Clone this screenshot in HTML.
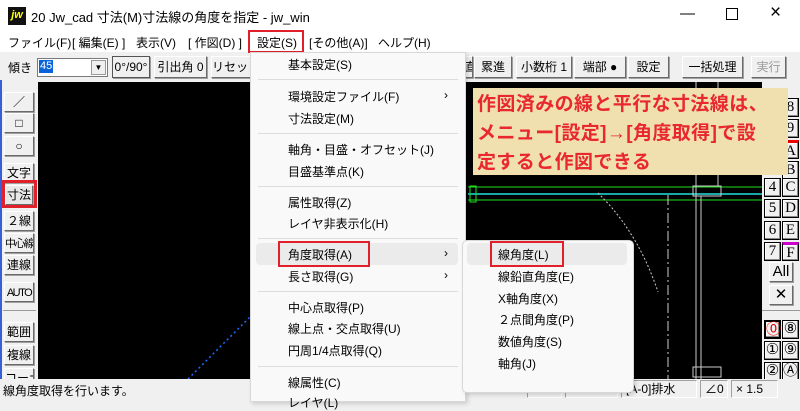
<!DOCTYPE html>
<html><head><meta charset="utf-8"><style>
*{margin:0;padding:0;box-sizing:border-box}
body{width:800px;height:400px;overflow:hidden;background:#f0f0f0;font-family:"Liberation Sans","Noto Sans CJK JP",sans-serif;font-size:12px;color:#000;position:relative}
.a{position:absolute;white-space:nowrap}
.btn{position:absolute;background:#f0f0f0;border:1px solid;border-color:#fff #6a6a6a #6a6a6a #fff;box-shadow:1px 1px 0 #a0a0a0;text-align:center;font-size:12px;line-height:18px;white-space:nowrap;overflow:hidden}
.mi{position:absolute;left:288px;font-size:12px;white-space:nowrap}
.sep{position:absolute;left:258px;width:200px;height:1px;background:#dcdcdc}
.si{position:absolute;left:498px;font-size:12px;white-space:nowrap}
.rb{position:absolute;width:17px;height:19px;background:#f0f0f0;border:1px solid #000;box-shadow:inset -1px -1px 0 #888,inset 1px 1px 0 #fff;font-family:"Liberation Serif",serif;font-size:15px;line-height:17px;text-align:center}
.sb{position:absolute;top:380px;height:18px;border:1px solid;border-color:#a0a0a0 #fff #fff #a0a0a0;font-size:12px;line-height:16px;padding-left:4px}
.cn{font-size:11px;letter-spacing:-1.5px}
</style></head><body>
<div class="a" style="left:0;top:0;width:800px;height:31px;background:#fff"></div>
<div class="a" style="left:8px;top:7px;width:18px;height:18px;background:#111;color:#ff0;font:italic bold 11px 'Liberation Sans';line-height:17px;text-align:center">jw</div>
<div class="a" style="left:31px;top:7px;font-size:13px">20 Jw_cad 寸法(M)寸法線の角度を指定 - jw_win</div>
<div class="a" style="left:680px;top:5px;font-size:15px">—</div>
<div class="a" style="left:726px;top:8px;width:12px;height:12px;border:1px solid #000"></div>
<div class="a" style="left:770px;top:2px;font-size:19px">×</div>
<div class="a" style="left:0;top:31px;width:800px;height:21px;background:#fff"></div>
<div class="a" style="left:8px;top:34px">ファイル(F)</div>
<div class="a" style="left:72px;top:34px">[ 編集(E) ]</div>
<div class="a" style="left:136px;top:34px">表示(V)</div>
<div class="a" style="left:188px;top:34px">[ 作図(D) ]</div>
<div class="a" style="left:248px;top:30px;width:56px;height:23px;border:2px solid #e0202a"></div>
<div class="a" style="left:257px;top:34px">設定(S)</div>
<div class="a" style="left:309px;top:34px">[その他(A)]</div>
<div class="a" style="left:378px;top:34px">ヘルプ(H)</div>
<div class="a" style="left:8px;top:59px">傾き</div>
<div class="a" style="left:37px;top:58px;width:71px;height:19px;background:#fff;border:1px solid #7a7a7a"></div>
<div class="a" style="left:39px;top:60px;background:#0a64d8;color:#fff;font-size:11px;line-height:13px;padding:0 1px">45</div>
<div class="a" style="left:91px;top:60px;width:15px;height:15px;background:#f0f0f0;border:1px solid #999;font-size:8px;text-align:center;line-height:14px">▼</div>
<div class="btn" style="left:112px;top:56px;width:38px;height:22px;line-height:20px;border:1px solid #555">0°/90°</div>
<div class="btn" style="left:154px;top:56px;width:53px;height:22px;line-height:20px">引出角 0</div>
<div class="btn" style="left:211px;top:56px;width:40px;height:22px;line-height:20px">リセット</div>
<div class="btn" style="left:463px;top:56px;width:10px;height:22px;line-height:20px">直</div>
<div class="btn" style="left:474px;top:56px;width:38px;height:22px;line-height:20px">累進</div>
<div class="btn" style="left:516px;top:56px;width:56px;height:22px;line-height:20px">小数桁 1</div>
<div class="btn" style="left:574px;top:56px;width:52px;height:22px;line-height:20px">端部 ●</div>
<div class="btn" style="left:628px;top:56px;width:41px;height:22px;line-height:20px">設定</div>
<div class="btn" style="left:682px;top:56px;width:61px;height:22px;line-height:20px">一括処理</div>
<div class="btn" style="left:751px;top:56px;width:35px;height:22px;line-height:20px;color:#999">実行</div>
<div class="a" style="left:38px;top:82px;width:724px;height:297px;background:#000;overflow:hidden">
<svg width="724" height="297" style="position:absolute;left:0;top:0">
<line x1="150" y1="297" x2="215" y2="232" stroke="#1e6cff" stroke-width="1.5" stroke-dasharray="2 3"/>
<line x1="430" y1="105" x2="724" y2="105" stroke="#20e020"/>
<line x1="430" y1="118" x2="724" y2="118" stroke="#20e020"/>
<line x1="430" y1="112" x2="724" y2="112" stroke="#20e0e0" stroke-width="1.5"/>
<rect x="432" y="104" width="6" height="16" fill="none" stroke="#20e020"/>
<g fill="none" stroke="#ccc">
<rect x="655" y="104" width="28" height="10"/>
<line x1="658" y1="0" x2="658" y2="297"/><line x1="680" y1="0" x2="680" y2="104"/>
<line x1="663" y1="114" x2="663" y2="297"/>
<rect x="655" y="285" width="28" height="10"/>
</g>
<path d="M560 111 Q600 150 620 210" stroke="#ccc" fill="none" stroke-dasharray="2 2"/>
<line x1="630" y1="113" x2="630" y2="297" stroke="#ccc" stroke-dasharray="10 3 2 3"/>
</svg></div>
<div class="a" style="left:0;top:80px;width:2px;height:300px;background:#3a5ed8"></div>
<div class="btn" style="left:4px;top:92px;width:30px;height:20px">／</div>
<div class="btn" style="left:4px;top:113px;width:30px;height:20px">□</div>
<div class="btn" style="left:4px;top:136px;width:30px;height:20px">○</div>
<div class="btn" style="left:4px;top:163px;width:30px;height:20px">文字</div>
<div class="btn" style="left:5px;top:185px;width:28px;height:20px;background:#e8e8e8">寸法</div>
<div class="a" style="left:2px;top:180px;width:35px;height:28px;border:3px solid #e0202a"></div>
<div class="btn" style="left:4px;top:211px;width:30px;height:20px">２線</div>
<div class="btn" style="left:4px;top:233px;width:30px;height:20px"><span class="cn">中心線</span></div>
<div class="btn" style="left:4px;top:255px;width:30px;height:20px">連線</div>
<div class="btn" style="left:4px;top:282px;width:30px;height:20px"><span class="cn">AUTO</span></div>
<div class="a" style="left:3px;top:310px;width:33px;height:1px;background:#999"></div>
<div class="btn" style="left:4px;top:322px;width:30px;height:20px">範囲</div>
<div class="btn" style="left:4px;top:345px;width:30px;height:20px">複線</div>
<div class="btn" style="left:4px;top:368px;width:30px;height:12px">コーナー</div>
<div class="rb" style="left:782px;top:98px">8</div>
<div class="rb" style="left:782px;top:119px">9</div>
<div class="rb" style="left:782px;top:140px;border-top:3px solid #e00">A</div>
<div class="rb" style="left:782px;top:161px">B</div>
<div class="rb" style="left:764px;top:178px">4</div><div class="rb" style="left:782px;top:178px">C</div>
<div class="rb" style="left:764px;top:199px">5</div><div class="rb" style="left:782px;top:199px">D</div>
<div class="rb" style="left:764px;top:221px">6</div><div class="rb" style="left:782px;top:221px">E</div>
<div class="rb" style="left:764px;top:242px">7</div><div class="rb" style="left:782px;top:242px;border-top:3px solid #c0c">F</div>
<div class="btn" style="left:769px;top:262px;width:24px;height:20px;font-size:15px">All</div>
<div class="btn" style="left:769px;top:285px;width:24px;height:20px;font-size:15px">✕</div>
<div class="a" style="left:762px;top:310px;width:38px;height:1px;background:#999"></div>
<div class="rb" style="left:764px;top:320px;color:#e00;border:2px solid #000">⓪</div><div class="rb" style="left:782px;top:320px">⑧</div>
<div class="rb" style="left:764px;top:341px">①</div><div class="rb" style="left:782px;top:341px">⑨</div>
<div class="rb" style="left:764px;top:362px">②</div><div class="rb" style="left:782px;top:362px">Ⓐ</div>
<div class="a" style="left:473px;top:88px;width:315px;height:87px;background:#f0e0b0;color:#e8282e;font-size:19px;font-weight:bold;line-height:29px;padding:2px 0 0 4px;letter-spacing:0.4px">作図済みの線と平行な寸法線は、<br>メニュー[設定]→[角度取得]で設<br>定すると作図できる</div>
<div class="a" style="left:0;top:379px;width:800px;height:21px;background:#f0f0f0"></div>
<div class="a" style="left:3px;top:382px">線角度取得を行います。</div>
<div class="sb" style="left:527px;width:35px">A-2</div>
<div class="sb" style="left:565px;width:53px">S=1/50</div>
<div class="sb" style="left:621px;width:76px">[A-0]排水</div>
<div class="sb" style="left:700px;width:28px">∠0</div>
<div class="sb" style="left:731px;width:47px">× 1.5</div>
<div class="a" style="left:250px;top:52px;width:216px;height:350px;background:#f9f9f9;border:1px solid #d8d8d8;box-shadow:2px 2px 4px rgba(0,0,0,.15)"></div>
<div class="mi" style="top:56px">基本設定(S)</div>
<div class="sep" style="top:79px"></div>
<div class="mi" style="top:88px">環境設定ファイル(F)</div><div class="a" style="left:444px;top:88px">›</div>
<div class="mi" style="top:110px">寸法設定(M)</div>
<div class="sep" style="top:133px"></div>
<div class="mi" style="top:141px">軸角・目盛・オフセット(J)</div>
<div class="mi" style="top:163px">目盛基準点(K)</div>
<div class="sep" style="top:186px"></div>
<div class="mi" style="top:194px">属性取得(Z)</div>
<div class="mi" style="top:215px">レイヤ非表示化(H)</div>
<div class="sep" style="top:238px"></div>
<div class="a" style="left:256px;top:243px;width:202px;height:22px;background:#ebebeb;border-radius:4px"></div>
<div class="mi" style="top:246px">角度取得(A)</div><div class="a" style="left:444px;top:246px">›</div>
<div class="a" style="left:278px;top:241px;width:92px;height:26px;border:2px solid #e0202a"></div>
<div class="mi" style="top:268px">長さ取得(G)</div><div class="a" style="left:444px;top:268px">›</div>
<div class="sep" style="top:291px"></div>
<div class="mi" style="top:299px">中心点取得(P)</div>
<div class="mi" style="top:320px">線上点・交点取得(U)</div>
<div class="mi" style="top:342px">円周1/4点取得(Q)</div>
<div class="sep" style="top:366px"></div>
<div class="mi" style="top:374px">線属性(C)</div>
<div class="mi" style="top:394px">レイヤ(L)</div>
<div class="a" style="left:462px;top:240px;width:172px;height:153px;background:#f9f9f9;border:1px solid #d8d8d8;border-radius:5px;box-shadow:2px 2px 4px rgba(0,0,0,.15)"></div>
<div class="a" style="left:467px;top:243px;width:160px;height:22px;background:#ebebeb;border-radius:4px"></div>
<div class="a" style="left:490px;top:241px;width:74px;height:26px;border:2px solid #e0202a"></div>
<div class="si" style="top:246px">線角度(L)</div>
<div class="si" style="top:268px">線鉛直角度(E)</div>
<div class="si" style="top:290px">X軸角度(X)</div>
<div class="si" style="top:311px">２点間角度(P)</div>
<div class="si" style="top:333px">数値角度(S)</div>
<div class="si" style="top:355px">軸角(J)</div>
</body></html>
